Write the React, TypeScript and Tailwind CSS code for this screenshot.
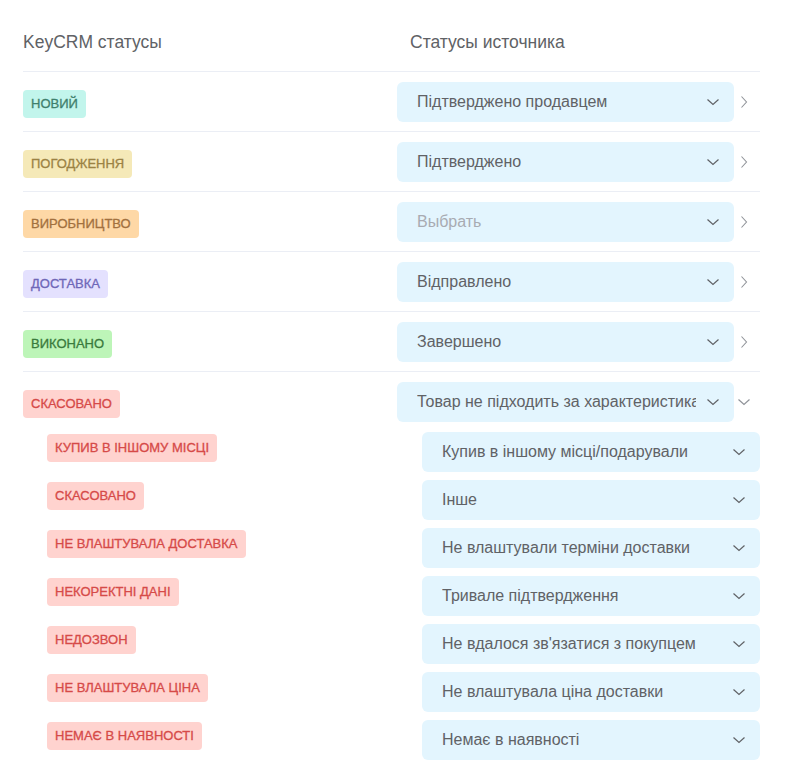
import React from "react";

type Row = { label: string; badge: string; value: string; placeholder?: boolean };

const rows: Row[] = [
  { label: "НОВИЙ", badge: "bg-[#c2f5ec] text-[#3f7f6c]", value: "Підтверджено продавцем" },
  { label: "ПОГОДЖЕННЯ", badge: "bg-[#f5e9b8] text-[#9b8244]", value: "Підтверджено" },
  { label: "ВИРОБНИЦТВО", badge: "bg-[#fed8a6] text-[#a2703e]", value: "Выбрать", placeholder: true },
  { label: "ДОСТАВКА", badge: "bg-[#e4e1fe] text-[#6f67b8]", value: "Відправлено" },
  { label: "ВИКОНАНО", badge: "bg-[#bdf5b8] text-[#3a7a3c]", value: "Завершено" },
];

const subRows: [string, string][] = [
  ["КУПИВ В ІНШОМУ МІСЦІ", "Купив в іншому місці/подарували"],
  ["СКАСОВАНО", "Інше"],
  ["НЕ ВЛАШТУВАЛА ДОСТАВКА", "Не влаштували терміни доставки"],
  ["НЕКОРЕКТНІ ДАНІ", "Тривале підтвердження"],
  ["НЕДОЗВОН", "Не вдалося зв'язатися з покупцем"],
  ["НЕ ВЛАШТУВАЛА ЦІНА", "Не влаштувала ціна доставки"],
  ["НЕМАЄ В НАЯВНОСТІ", "Немає в наявності"],
];

const Down = ({ className = "" }: { className?: string }) => (
  <svg width="14" height="14" viewBox="0 0 14 14" className={className} fill="none" stroke="currentColor" strokeWidth="1.2">
    <path d="M1.5 4.5 L7 9.5 L12.5 4.5" />
  </svg>
);

const Right = () => (
  <svg width="14" height="14" viewBox="0 0 14 14" fill="none" stroke="currentColor" strokeWidth="1.1">
    <path d="M4.5 1.5 L9.5 7 L4.5 12.5" />
  </svg>
);

const Badge = ({ label, cls }: { label: string; cls: string }) => (
  <span className={`inline-flex h-7 items-center rounded px-2 text-[13px] [-webkit-text-stroke:0.3px_currentColor] ${cls}`}>{label}</span>
);

const Select = ({ value, placeholder, w }: { value: string; placeholder?: boolean; w: string }) => (
  <div className={`flex h-10 ${w} items-center rounded-md bg-[#e3f5fe] pl-5 pr-[14px]`}>
    <span className={`flex-1 overflow-hidden whitespace-nowrap text-base ${placeholder ? "text-[#a8abb2]" : "text-[#606266]"}`}>{value}</span>
    <Down className="ml-[10px] shrink-0 text-[#606266]" />
  </div>
);

export default function App() {
  return (
    <div className="min-h-[766px] bg-white px-[23px] text-[#606266]" style={{ fontFamily: '"Liberation Sans", Arial, sans-serif' }}>
      <div className="w-[737px]">
        <div className="flex border-b border-[#ebeef5] pb-[17px] pt-[30px] text-[17.5px] leading-6">
          <div className="w-[387px]">KeyCRM статусы</div>
          <div>Статусы источника</div>
        </div>
        {rows.map((r) => (
          <div key={r.label} className="flex h-[60px] items-start border-b border-[#ebeef5]">
            <div className="w-[374px] pt-[18px]">
              <Badge label={r.label} cls={r.badge} />
            </div>
            <div className="flex items-center pt-[10px]">
              <Select value={r.value} placeholder={r.placeholder} w="w-[337px]" />
              <div className="ml-[3px] text-[#909399]">
                <Right />
              </div>
            </div>
          </div>
        ))}
        <div className="flex h-[60px] items-start">
          <div className="w-[374px] pt-[18px]">
            <Badge label="СКАСОВАНО" cls="bg-[#ffd3cf] text-[#d64a48]" />
          </div>
          <div className="flex items-center pt-[10px]">
            <Select value="Товар не підходить за характеристиками" w="w-[337px]" />
            <div className="ml-[3px] text-[#909399]">
              <Down />
            </div>
          </div>
        </div>
        <div className="flex flex-col gap-2">
          {subRows.map(([l, v]) => (
            <div key={l} className="flex h-10 items-start">
              <div className="w-[399px] pl-6 pt-[2px]">
                <Badge label={l} cls="bg-[#ffd3cf] text-[#d64a48]" />
              </div>
              <Select value={v} w="w-[338px]" />
            </div>
          ))}
        </div>
      </div>
    </div>
  );
}
